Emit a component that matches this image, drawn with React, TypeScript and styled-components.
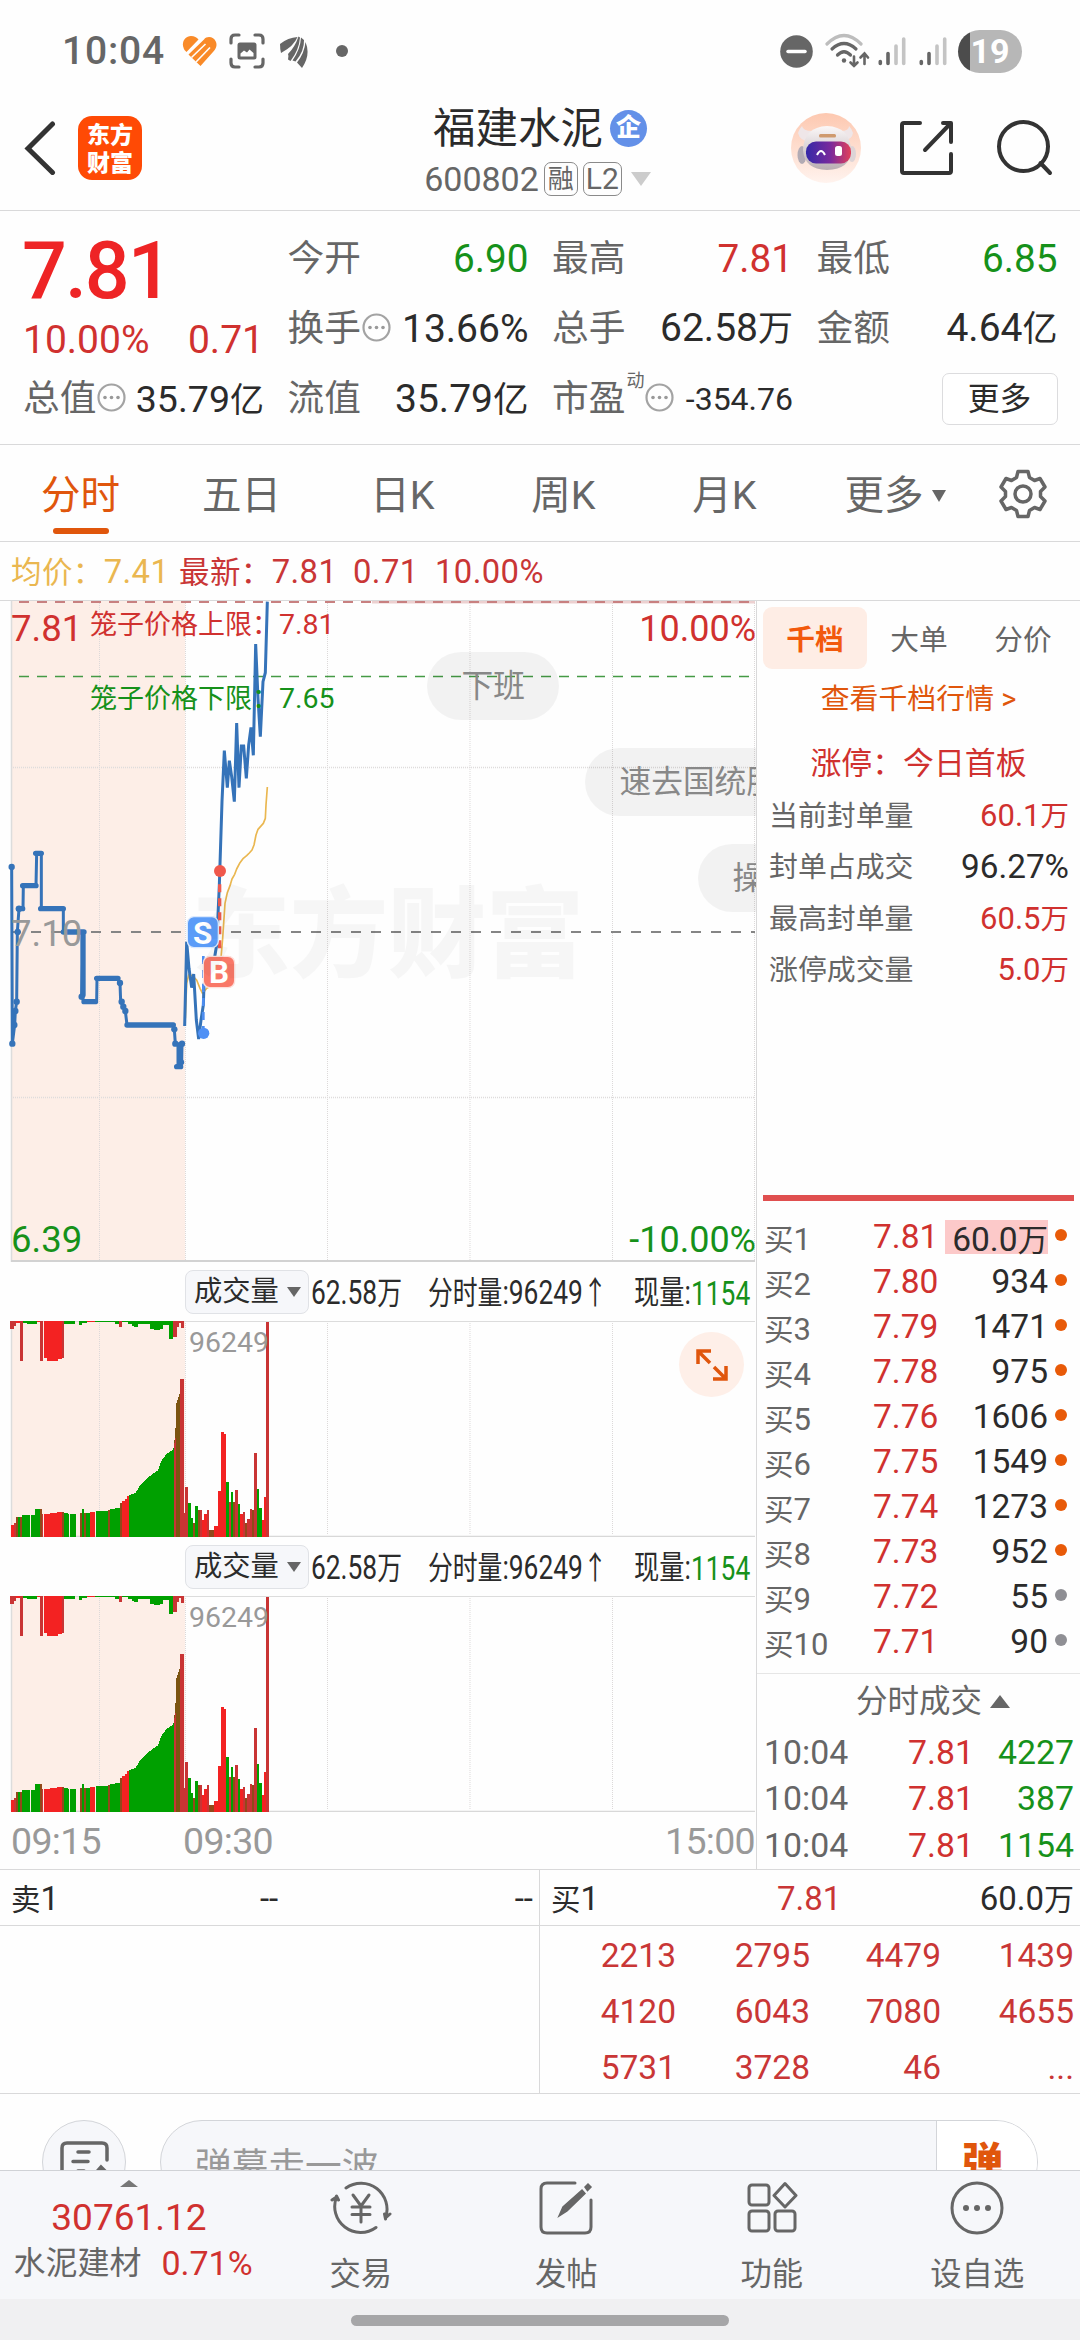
import React from 'react';
import styled, { createGlobalStyle } from 'styled-components';

const RED = '#d0312f';
const GREEN = '#16911a';
const ORANGE = '#e0560c';
const GRAY = '#666';
const INK = '#2b2b2b';
const LINE = '#d9d9da';

const GlobalStyle = createGlobalStyle`
  * { box-sizing: border-box; }
  body {
    margin: 0;
    background: #fefefe;
    font-family: Roboto, 'Noto Sans CJK SC', sans-serif;
    color: ${INK};
  }
  svg { display: block; flex: none; }
`;

const Screen = styled.main`
  width: 1080px;
  height: 2340px;
  overflow: hidden;
  display: flex;
  flex-direction: column;
  background: #fefefe;
`;

/* ---------- status bar ---------- */
const StatusBar = styled.div`
  height: 102px;
  flex: none;
  display: flex;
  justify-content: space-between;
  padding: 0 58px 0 62px;
  align-items: center;
`;
const StatusGroup = styled.div`
  display: flex;
  align-items: center;
  height: 44px;
`;
const Clock = styled.span`
  font-size: 39px;
  font-weight: 500;
  line-height: 44px;
  width: 120px;
  color: ${GRAY};
  letter-spacing: 0.8px;
`;
const Battery = styled.div`
  width: 64px;
  height: 43px;
  border-radius: 22px;
  background: linear-gradient(90deg, #4c4c4c 12px, #b7b7b7 12px);
  color: #fff;
  font-weight: 700;
  font-size: 34px;
  line-height: 43px;
  text-align: center;
`;

/* ---------- header ---------- */
const Header = styled.header`
  height: 109px;
  flex: none;
  display: grid;
  grid-template-columns: 400px 1fr 400px;
  border-bottom: 1px solid ${LINE};
`;
const HeaderLeft = styled.div`
  display: flex;
  align-items: center;
  padding: 0 0 17px 24px;
  gap: 22px;
`;
const HeaderRight = styled.div`
  display: flex;
  align-items: center;
  justify-content: flex-end;
  padding: 0 27px 17px 0;
`;
const AppLogo = styled.div`
  width: 64px;
  height: 64px;
  border-radius: 14px;
  background: #ff4a05;
  color: #fff;
  font: 900 23px/28px 'Noto Sans CJK SC', sans-serif;
  text-align: center;
  padding-top: 3px;
`;
const TitleBlock = styled.div`
  display: flex;
  flex-direction: column;
  align-items: center;
`;
const TitleRow = styled.div`
  display: flex;
  align-items: center;
  height: 53px;
  gap: 7px;
  font-size: 42.5px;
  line-height: 53px;
  white-space: nowrap;
`;
const Verified = styled.span`
  width: 37px;
  height: 37px;
  border-radius: 50%;
  background: #6390e8;
  color: #fff;
  font-size: 25px;
  font-weight: 900;
  line-height: 35px;
  text-align: center;
`;
const CodeRow = styled.div`
  display: flex;
  align-items: center;
  height: 48px;
  gap: 5px;
  font-size: 34px;
  color: ${GRAY};
  margin-left: -5px;
`;
const Tag = styled.span<{ $w: number }>`
  width: ${p => p.$w}px;
  height: 34px;
  border: 1px solid #8a8a8a;
  border-radius: 7px;
  font-size: ${p => (p.$w > 35 ? 30 : 26)}px;
  line-height: 32px;
  display: flex;
  justify-content: center;
`;
const Triangle = styled.i<{ $w: number; $h: number; $c: string; $up?: boolean; $ml?: number }>`
  width: 0;
  height: 0;
  flex: none;
  margin-left: ${p => p.$ml || 0}px;
  border-left: ${p => p.$w / 2}px solid transparent;
  border-right: ${p => p.$w / 2}px solid transparent;
  ${p => (p.$up ? 'border-bottom' : 'border-top')}: ${p => p.$h}px solid ${p => p.$c};
`;

/* ---------- quote ---------- */
const Quote = styled.section`
  height: 234px;
  flex: none;
  display: grid;
  grid-template-columns: 241px 241px 241px 241px;
  column-gap: 23.5px;
  grid-template-rows: 70px 70px 70px;
  padding: 13px 23px 0;
  border-bottom: 1px solid ${LINE};
`;
const BigPrice = styled.div`
  font-size: 79px;
  font-weight: 500;
  line-height: 95px;
  color: #ee2425;
  height: 70px;
  letter-spacing: -2px;
  margin-left: -1px;
`;
const QuoteCell = styled.div<{ $c?: string; $drop?: number }>`
  display: flex;
  align-items: center;
  justify-content: space-between;
  font-size: 39px;
  color: ${p => p.$c || INK};
  white-space: nowrap;
  line-height: 70px;
  padding-top: ${p => p.$drop || 0}px;
`;
const QuoteLabel = styled.span`
  font-size: 36.7px;
  color: ${GRAY};
  display: flex;
  align-items: center;
  gap: 1px;
`;
const QuoteValue = styled.span<{ $size?: number }>`
  font-size: ${p => p.$size || 38.7}px;
`;
const Sup = styled.sup`
  font-size: 18px;
  line-height: 20px;
  align-self: flex-start;
  margin-top: 7px;
`;
const MoreButton = styled.button`
  margin-left: auto;
  width: 116px;
  height: 52px;
  border: 1px solid #dcdcde;
  border-radius: 7px;
  background: #fff;
  font: 31.8px/48px Roboto, 'Noto Sans CJK SC', sans-serif;
  color: ${INK};
  padding: 0;
`;

/* ---------- period tabs ---------- */
const Tabs = styled.nav`
  height: 97px;
  flex: none;
  display: grid;
  grid-template-columns: repeat(5, 161px) 180px 1fr;
  border-bottom: 1px solid ${LINE};
`;
const Tab = styled.div<{ $on?: boolean }>`
  display: flex;
  flex-direction: column;
  align-items: center;
  font-size: 39.5px;
  line-height: 60px;
  padding-top: 21px;
  color: ${p => (p.$on ? ORANGE : GRAY)};
  &::after {
    content: '';
    width: 56px;
    height: 6px;
    border-radius: 3px;
    margin-top: 2px;
    background: ${p => (p.$on ? ORANGE : 'transparent')};
  }
`;
const TabText = styled.span`
  display: flex;
  align-items: center;
  gap: 8px;
`;
const TabIcon = styled.div`
  padding: 24px 0 0 14px;
`;

const InfoLine = styled.div`
  height: 59px;
  flex: none;
  display: flex;
  font-size: 32.8px;
  line-height: 60px;
  letter-spacing: 0.4px;
  padding-left: 11px;
  color: #c93636;
  border-bottom: 1px solid ${LINE};
  white-space: pre;
`;
const InfoItem = styled.span<{ $w: number; $c?: string }>`
  width: ${p => p.$w}px;
  color: ${p => p.$c || 'inherit'};
`;
const Cjk = styled.span<{ $s: number }>`
  font-size: ${p => p.$s}px;
`;

/* ---------- chart ---------- */
const Body = styled.section`
  display: flex;
  height: 1269px;
  flex: none;
  border-bottom: 1px solid ${LINE};
`;
const ChartColumn = styled.div`
  width: 757px;
  border-right: 1px solid ${LINE};
  position: relative;
  flex: none;
`;
const PriceChart = styled.div`
  position: relative;
  height: 661px;
  overflow: hidden;
`;
const Overlay = styled.span<{ $x?: number; $r?: number; $y: number; $s: number; $c: string }>`
  position: absolute;
  ${p => (p.$r !== undefined ? `right: ${p.$r}px` : `left: ${p.$x}px`)};
  top: ${p => p.$y}px;
  font-size: ${p => p.$s}px;
  line-height: 40px;
  color: ${p => p.$c};
  white-space: pre;
`;
const Watermark = styled.span`
  position: absolute;
  left: 192px;
  top: 267px;
  font: 900 98px/116px 'Noto Sans CJK SC', sans-serif;
  color: #000;
  opacity: 0.028;
`;
const Bullet = styled.span<{ $x: number; $y: number }>`
  position: absolute;
  left: ${p => p.$x}px;
  top: ${p => p.$y}px;
  height: 68px;
  border-radius: 34px;
  padding: 0 34.5px;
  background: rgba(0, 0, 0, 0.047);
  color: #888;
  font-size: 31.7px;
  line-height: 70px;
  white-space: nowrap;
`;
const VolumeHeader = styled.div`
  height: 59px;
  display: flex;
  align-items: center;
  padding: 0 0 0 185px;
`;
const VolumeSelect = styled.div`
  width: 124px;
  height: 44px;
  border: 1px solid #e0e2e6;
  border-radius: 8px;
  background: #f6f7fa;
  display: flex;
  align-items: center;
  gap: 8px;
  padding-left: 8px;
  font-size: 28.3px;
  line-height: 42px;
`;
const Condensed = styled.span<{ $w: number; $c?: string }>`
  width: ${p => p.$w}px;
  font-size: 34px;
  line-height: 44px;
  padding-top: 2px;
  white-space: nowrap;
  color: ${p => p.$c || INK};
  flex: none;
  transform: scaleX(0.775);
  transform-origin: left;
`;
const VolumeChart = styled.div`
  height: 216px;
  position: relative;
`;
const ExpandButton = styled.div`
  position: absolute;
  left: 679px;
  top: 11px;
  width: 65px;
  height: 65px;
  border-radius: 50%;
  background: #feefe8;
  display: grid;
  place-items: center;
`;
const TimeAxis = styled.div`
  height: 56px;
  display: grid;
  grid-template-columns: 172px 1fr auto;
  padding: 0 1px 0 11px;
  font-size: 37.5px;
  letter-spacing: -0.7px;
  line-height: 58px;
  color: #999;
`;

/* ---------- order book ---------- */
const Book = styled.aside`
  flex: 1;
  display: flex;
  flex-direction: column;
`;
const BookTabs = styled.div`
  display: grid;
  grid-template-columns: repeat(3, 104px);
  padding: 6px 0 0 6px;
  height: 68px;
`;
const BookTab = styled.span<{ $on?: boolean }>`
  height: 62px;
  border-radius: 9px;
  text-align: center;
  font-size: 28.7px;
  line-height: 67px;
  color: ${p => (p.$on ? '#f2590c' : GRAY)};
  font-weight: ${p => (p.$on ? 700 : 400)};
  background: ${p => (p.$on ? '#feede5' : 'transparent')};
`;
const BookLink = styled.div`
  height: 60px;
  text-align: center;
  font-size: 28.9px;
  line-height: 61px;
  color: ${ORANGE};
`;
const LimitTitle = styled.div`
  height: 61px;
  text-align: center;
  font-size: 30.9px;
  line-height: 70px;
  color: ${RED};
`;
const LimitRow = styled.div`
  display: flex;
  justify-content: space-between;
  padding: 0 11px 0 12px;
  height: 51.3px;
  line-height: 52px;
  font-size: 28.9px;
  color: ${GRAY};
`;
const LimitValue = styled.span<{ $dark?: boolean }>`
  font-size: ${p => (p.$dark ? 33.3 : 31)}px;
  color: ${p => (p.$dark ? INK : RED)};
`;
const RedBar = styled.div`
  height: 6px;
  margin: 200px 6px 14px;
  background: #e04f4f;
`;
const Level = styled.div`
  display: grid;
  grid-template-columns: 109px 72px 103px 1fr;
  height: 45px;
  padding-left: 7px;
  line-height: 45px;
  align-items: center;
`;
const LevelName = styled.span`
  font-size: 31px;
  color: ${GRAY};
  height: 45px;
  line-height: 50px;
`;
const LevelPrice = styled.span`
  font-size: 33.5px;
  color: ${RED};
  margin-top: -1px;
`;
const LevelQty = styled.span<{ $hot?: boolean }>`
  font-size: 33.5px;
  text-align: right;
  height: ${p => (p.$hot ? 34 : 45)}px;
  line-height: ${p => (p.$hot ? 39 : 44)}px;
  background: ${p => (p.$hot ? '#fcc9c9' : 'transparent')};
  white-space: nowrap;
`;
const Dot = styled.i<{ $c: string }>`
  width: 12px;
  height: 12px;
  border-radius: 50%;
  margin: -4px 0 0 7px;
  background: ${p => p.$c};
`;
const TradesTitle = styled.div`
  margin-top: 8px;
  border-top: 1px solid #e6e6e6;
  height: 57px;
  display: flex;
  align-items: center;
  gap: 8px;
  font-size: 31.5px;
  line-height: 56px;
  color: ${GRAY};
  padding-left: 99px;
`;
const Trade = styled.div`
  display: grid;
  grid-template-columns: 144px 60px 1fr;
  height: 48px;
  line-height: 46px;
  padding: 0 6px 0 7px;
  font-size: 33.8px;
  color: ${GRAY};
`;
const Colored = styled.span<{ $c: string; $right?: boolean }>`
  color: ${p => p.$c};
  text-align: ${p => (p.$right ? 'right' : 'left')};
`;

/* ---------- queue ---------- */
const Queue = styled.section`
  height: 224px;
  flex: none;
  display: grid;
  grid-template-columns: 540px 540px;
  grid-template-rows: 56px 168px;
  border-bottom: 1px solid ${LINE};
`;
const QueueHead = styled.div<{ $left?: boolean }>`
  display: grid;
  grid-template-columns: ${p => (p.$left ? '249px 1fr auto' : '226px 1fr auto')};
  padding: 0 6px 0 11px;
  font-size: 33px;
  line-height: 58px;
  border-bottom: 1px solid ${LINE};
  border-right: ${p => (p.$left ? `1px solid ${LINE}` : 'none')};
`;
const QueueEmpty = styled.div`
  border-right: 1px solid ${LINE};
`;
const QueueGrid = styled.div`
  display: grid;
  grid-template-columns: 136px 134px 131px 133px;
  grid-template-rows: repeat(3, 56px);
  text-align: right;
  font-size: 33.5px;
  line-height: 60px;
  color: #c93636;
`;

/* ---------- barrage ---------- */
const Barrage = styled.section`
  height: 76px;
  flex: none;
  overflow: hidden;
  display: flex;
  padding: 26px 42px 0;
  gap: 34px;
`;
const RoundButton = styled.div`
  width: 84px;
  height: 84px;
  border-radius: 50%;
  border: 1px solid #d3d5d9;
  background: #f6f7fa;
  padding: 20px 0 0 17px;
  flex: none;
`;
const BarrageInput = styled.div`
  flex: 1;
  height: 84px;
  border-radius: 42px;
  border: 1px solid #d3d5d9;
  background: #f6f7fa;
  overflow: hidden;
  display: flex;
  font-size: 36.7px;
  line-height: 92px;
  color: #999;
  padding-left: 34px;
  justify-content: space-between;
`;
const BarrageSend = styled.span`
  width: 101px;
  background: #fff;
  border-left: 1px solid #d3d5d9;
  padding-left: 25px;
  color: ${ORANGE};
  font-weight: 900;
  font-size: 41px;
  line-height: 84px;
`;

/* ---------- bottom nav ---------- */
const BottomNav = styled.nav`
  height: 129px;
  flex: none;
  border-top: 1px solid #d0d2d6;
  background: #f6f7fa;
  display: grid;
  grid-template-columns: 258px repeat(4, 205.5px);
`;
const IndexCell = styled.div`
  display: flex;
  flex-direction: column;
  align-items: center;
  padding-top: 9px;
`;
const IndexValue = styled.span`
  font-size: 37px;
  line-height: 42px;
  margin-top: 10px;
  color: ${RED};
`;
const IndexLine = styled.div`
  display: flex;
  gap: 20px;
  font-size: 32px;
  line-height: 48px;
  color: ${GRAY};
  white-space: nowrap;
  margin-left: 8px;
`;
const IndexChange = styled.span`
  font-size: 34px;
  color: ${RED};
`;
const NavItem = styled.div`
  display: flex;
  flex-direction: column;
  align-items: center;
  padding-top: 8px;
  gap: 15px;
  font-size: 31.3px;
  line-height: 46px;
  color: ${GRAY};
`;
const HomeArea = styled.div`
  height: 42px;
  flex: none;
  background: #f0f0f2;
  display: flex;
  justify-content: center;
  padding-top: 16px;
  &::after {
    content: '';
    width: 378px;
    height: 11px;
    border-radius: 6px;
    background: #a6a6a8;
  }
`;
const Spacer = styled.span<{ $w: number }>`
  width: ${p => p.$w}px;
  flex: none;
`;

/* ---------- icons ---------- */
const HeartIcon = () => (
  <svg width="36" height="32" viewBox="0 0 36 32">
    <path d="M2.500 15 C-1.500 8 2.500 1 9 1 C12.500 1 14.500 2.500 16.500 4.500 L4.500 17 Z" fill="#f98a28" />
    <path d="M6.500 19.500 L22 4.500 C25 0.500 32 1.500 34 7 C35.500 11 33.500 14.500 31 17 L18.500 31 L8 21 Z" fill="#f98a28" />
    <path d="M9.500 22.500 L23.500 9" fill="none" stroke="#fefefe" strokeWidth="1.600" />
    <path d="M14 27 L28 12.500" fill="none" stroke="#fefefe" strokeWidth="1.600" />
  </svg>
);
const CaptureIcon = () => (
  <svg width="36" height="36" viewBox="0 0 36 36" fill="none" stroke="#666" strokeWidth="3.200" strokeLinecap="round">
    <path d="M2 10 V6 Q2 2 6 2 H10 M26 2 H30 Q34 2 34 6 V10 M34 26 V30 Q34 34 30 34 H26 M10 34 H6 Q2 34 2 30 V26" />
    <rect x="8.500" y="9.500" width="19" height="17" rx="2.500" fill="#666" stroke="none" />
    <path d="M11.500 23.500 V20.500 L15 17.500 L18 19.500 L20.500 16.500 L24.500 20 V23.500 Z" fill="#fff" stroke="none" />
  </svg>
);
const FeatherIcon = () => (
  <svg width="28" height="33" viewBox="0 0 28 33" fill="#666">
    <path d="M0 9 Q8 2.500 17.500 2 Q14 11 1 18 Q0 14 0 9Z" />
    <path d="M18.500 1.500 L20 2.500 Q19 15 10.500 26 L8 24.500 Q9 21 8 19 Q15 12 18.500 1.500Z" />
    <path d="M21 2.500 L24 5 Q24.500 16 15.500 26.500 L12.500 25.500 Q20.500 14 21 2.500Z" />
    <path d="M25.500 7 Q31 20 22 33 L17 27.500 Q24.500 18 25.500 7Z" />
  </svg>
);
const WifiIcon = () => (
  <svg width="46" height="36" viewBox="0 0 46 36" fill="none" stroke="#666" strokeWidth="3.200" strokeLinecap="round">
    <path d="M2 11 Q19 -6 36 11" stroke="#bdbdbd" />
    <path d="M7 16 Q19 5 31 16" />
    <path d="M12.500 22 Q19 15.500 25.500 22" />
    <circle cx="19" cy="27.500" r="2.200" fill="#666" stroke="none" />
    <path d="M29 23.500 V33 M25.500 29.500 L29 33 L32.500 29.500 M39.500 31 V21 M35.500 24.500 L39.500 20.500 L43 24.500" strokeWidth="2.600" />
  </svg>
);
const SignalIcon = () => (
  <svg width="28" height="30" viewBox="0 0 28 30" strokeWidth="3.600" strokeLinecap="round">
    <path d="M2.300 25.500 V27.500 M10 17.500 V27.500" stroke="#666" />
    <path d="M18 10 V27.500 M25.700 3 V27.500" stroke="#c4c4c4" />
  </svg>
);
const RobotIcon = () => (
  <svg width="70" height="70" viewBox="0 0 70 70">
    <defs>
      <linearGradient id="sky" x1="0" y1="0" x2="0" y2="1"><stop offset="0" stopColor="#fdc8b0" /><stop offset="1" stopColor="#fff3ee" /></linearGradient>
      <linearGradient id="visor" x1="0" y1="0" x2="1" y2="0"><stop offset="0" stopColor="#3529a8" /><stop offset="0.550" stopColor="#7a2a9c" /><stop offset="1" stopColor="#e2405a" /></linearGradient>
      <linearGradient id="head" x1="0" y1="0" x2="0" y2="1"><stop offset="0" stopColor="#fbf8f8" /><stop offset="1" stopColor="#b9adb2" /></linearGradient>
    </defs>
    <circle cx="35" cy="35" r="35" fill="url(#sky)" />
    <path d="M11 13 Q12 18 21 18 L18 28 Q9 28 7 20 Q8 16 11 13 M58 13 Q58 18 50 18 L53 27 Q61 27 62 20 Q61 16 58 13" fill="#efe6e8" />
    <ellipse cx="11" cy="42" rx="4.500" ry="9" fill="#b2abb4" />
    <ellipse cx="61" cy="41" rx="4" ry="8" fill="#ddd4d6" />
    <path d="M12 37 Q13 14 36 13 Q59 14 60 37 Q60 56 36 57 Q13 56 12 37Z" fill="url(#head)" />
    <rect x="28" y="21" width="17" height="3.500" rx="1.500" fill="#cf9a6e" />
    <rect x="15" y="28.500" width="45" height="22" rx="10" fill="url(#visor)" />
    <path d="M26 42 Q30 34 34 42" fill="none" stroke="#fff" strokeWidth="2" />
    <rect x="44" y="33" width="7" height="10" rx="2.500" fill="#fff" />
  </svg>
);
const ShareIcon = () => (
  <svg width="56" height="56" viewBox="0 0 56 56" fill="none" stroke="#333" strokeWidth="4" strokeLinecap="round" strokeLinejoin="round">
    <path d="M21 3 H5 Q3 3 3 5 V51 Q3 53 5 53 H50 Q52 53 52 51 V34" />
    <path d="M44 3 H52 V22 M51 4 L26 30" />
  </svg>
);
const SearchIcon = () => (
  <svg width="57" height="57" viewBox="0 0 57 57" fill="none" stroke="#333" strokeWidth="4" strokeLinecap="round">
    <circle cx="27.500" cy="27.500" r="24.500" />
    <path d="M44.500 44 L54 54" />
  </svg>
);
const MoreDots = () => (
  <svg width="29" height="33" viewBox="0 0 29 33">
    <circle cx="14.500" cy="14.500" r="13" fill="none" stroke="#a3a3a3" strokeWidth="2.200" />
    <g fill="#999"><circle cx="8" cy="14.500" r="1.800" /><circle cx="14.500" cy="14.500" r="1.800" /><circle cx="21" cy="14.500" r="1.800" /></g>
  </svg>
);
const GearIcon = () => (
  <svg width="48" height="50" viewBox="-24 -25 48 50" fill="none" stroke="#666" strokeWidth="3.500" strokeLinejoin="round">
    <path d="M-5 -22.500 H5 L6.500 -16.500 L11.500 -13.500 L17 -15.500 L22 -7 L17.500 -2.500 V2.500 L22 7 L17 15.500 L11.500 13.500 L6.500 16.500 L5 22.500 H-5 L-6.500 16.500 L-11.500 13.500 L-17 15.500 L-22 7 L-17.500 2.500 V-2.500 L-22 -7 L-17 -15.500 L-11.500 -13.500 L-6.500 -16.500 Z" />
    <circle r="8" />
  </svg>
);

/* ---------- chart drawings: units are thirds of a pixel ---------- */
const GRID_X = [99.500, 185.500, 327.500, 470, 612.500, 754.500];
const PRE_MARKET =
  '35,816 37,1346 44,1290 46,1248 50,1220 52,1011 57,941 69,941 70,872 108,872 110,775 124,775 124,941 190,941 190,1011 250,1011 245,1205 252,1220 290,1220 291,1150 352,1150 360,1164 362,1220 370,1235 376,1248 381,1290 518,1290 523,1303 526,1346 534,1346 534,1415 541,1415 541,1346 546,1346 545,1402';
const TRADING =
  '554,1293 560,1040 567,1120 575,1178 581,1137 589,1275 596,1332 603,1275 610,1230 612,1170 625,1100 640,1110 650,1050 658,870 666,620 673,467 682,578 688,497 695,545 703,620 710,384 717,578 724,453 731,453 739,550 746,450 753,397 760,481 767,147 774,310 781,425 789,260 796,233 802,20';
const AVERAGE =
  '556,1270 560,1165 567,1137 580,1145 590,1155 600,1180 608,1196 620,1180 640,1170 655,1165 662,1100 668,1030 675,925 682,893 690,872 696,852 704,838 710,822 720,803 730,790 740,782 748,774 756,765 762,750 768,720 774,703 782,694 790,685 796,670 798,630 802,576';
const THICK = 'M68 872H108 M107 775H124 M122 941H190 M190 1011H252 M249 1011V1200 M252 1220H286 M290 1150H354 M381 1290H520 M55 941H68 M530 1415H542';
const NODES = [[35, 816], [37, 1346], [43, 1290], [46, 1248], [50, 1220], [53, 1011], [57, 941], [245, 1205], [360, 1164], [365, 1220], [370, 1235], [376, 1248], [523, 1303], [526, 1346], [546, 1346], [543, 1402]];

const PriceDrawing = () => (
  <svg width="756" height="661" viewBox="0 0 756 661">
    <rect x="11" y="0" width="174" height="661" fill="#fdeee7" />
    <path d="M11.500 0V661" stroke="#dcdcdc" strokeWidth="1.500" />
    {GRID_X.map(x => <path key={x} d={`M${x} 2V660`} stroke="#dcd9d9" strokeDasharray="1 1" />)}
    <path d="M11 166.500H755M11 496.500H755" stroke="#dedcdc" strokeDasharray="1 1" strokeWidth="1.500" />
    <path d="M372 1H755" stroke="#ecd0d0" strokeWidth="3" />
    <path d="M19 1H750" stroke="#c88080" strokeWidth="2" strokeDasharray="10 8" />
    <path d="M19 75.500H750" stroke="#459a45" strokeWidth="1.400" strokeDasharray="10 8" />
    <path d="M11 331H755" stroke="#858585" strokeWidth="2" strokeDasharray="10 10" />
    <path d="M11 660H755" stroke="#d2d2d2" strokeWidth="2" />
    <g transform="translate(0 -6) scale(0.33333)" fill="none">
      <polyline points={AVERAGE} stroke="#eab750" strokeWidth="5" strokeLinejoin="round" />
      <polyline points={PRE_MARKET} stroke="#3573b9" strokeWidth="9" />
      <path d={THICK} stroke="#3573b9" strokeWidth="16" strokeLinecap="round" />
      {NODES.map(([x, y]) => <circle key={`${x}-${y}`} cx={x} cy={y} r="9.500" fill="#3573b9" />)}
      <polyline points={TRADING} stroke="#3573b9" strokeWidth="9" />
      <path d="M659 868V1062" stroke="#ee5a50" strokeWidth="10" strokeDasharray="24 18" />
      <path d="M610 1083V1300" stroke="#4d8df0" strokeWidth="8" strokeDasharray="24 18" />
      <circle cx="660" cy="828" r="18" fill="#f0584c" />
      <circle cx="611" cy="1315" r="17" fill="#4f90f5" />
      <rect x="562" y="965" width="93" height="93" rx="20" fill="#5b9cf8" stroke="#dbe9fd" strokeWidth="4" />
      <rect x="610" y="1084" width="94" height="94" rx="20" fill="#f97868" stroke="#fde0dc" strokeWidth="4" />
      <g fill="#fff" fontSize="94" fontWeight="700" textAnchor="middle" fontFamily="Roboto, sans-serif">
        <text x="608" y="1046">S</text>
        <text x="657" y="1165">B</text>
      </g>
    </g>
  </svg>
);

type Bar = [number, number, number, string];
const R = '#f32222', G = '#00a000', M = '#92491a', D = '#c93434';
const BARS: Bar[] = [
  [32, 41, 1306, R], [41, 49, 1298, D], [49, 66, 1280, M], [54, 60, 1280, G], [66, 91, 1274, G], [93, 106, 1274, G], [106, 120, 1257, G], [120, 125, 1257, M], [125, 130, 1272, D],
  [132, 172, 1272, R], [150, 186, 1269, R], [172, 192, 1265, R], [187, 193, 1265, M], [193, 203, 1269, G], [203, 208, 1273, G], [209, 227, 1273, G],
  [239, 247, 1270, M], [247, 253, 1258, G], [253, 257, 1270, M], [257, 270, 1268, G], [270, 286, 1267, R], [288, 304, 1264, G], [304, 323, 1262, G],
  [323, 329, 1260, M], [329, 345, 1258, G], [345, 360, 1254, G], [360, 366, 1240, M], [366, 374, 1232, R], [374, 380, 1226, R], [380, 387, 1218, R],
  [541, 551, 867, D], [551, 556, 1268, D], [556, 565, 1192, D], [565, 572, 1240, G], [572, 579, 1283, G], [579, 586, 1298, M], [586, 593, 1248, G],
  [593, 600, 1260, M], [600, 607, 1260, D], [607, 613, 1290, R], [613, 621, 1272, R], [621, 628, 1260, D], [628, 641, 1320, M], [641, 655, 1308, R],
  [655, 663, 1203, R], [663, 671, 1027, R], [671, 678, 1033, R], [678, 686, 1176, G], [686, 692, 1236, D], [692, 699, 1206, G], [699, 706, 1236, M],
  [706, 713, 1200, D], [713, 721, 1241, G], [721, 728, 1272, R], [728, 735, 1265, D], [735, 742, 1298, M], [742, 749, 1288, D], [749, 756, 1257, D],
  [756, 763, 1260, M], [763, 771, 1090, D], [771, 778, 1196, G], [778, 785, 1255, G], [785, 792, 1290, R], [792, 799, 1220, R], [798, 807, 696, D],
];
const TOP_BARS: Bar[] = [
  [30, 42, 716, D], [42, 47, 708, D], [47, 61, 699, R], [61, 69, 812, D], [69, 80, 698, G], [80, 110, 701, G], [110, 120, 697, R], [120, 129, 812, D], [132, 141, 805, R],
  [140, 175, 812, R], [175, 187, 807, R], [187, 193, 803, D], [193, 226, 702, G], [238, 246, 705, G], [246, 262, 699, G], [262, 284, 697, R], [284, 345, 697, G],
  [345, 357, 701, G], [357, 365, 710, D], [365, 385, 697, G], [385, 395, 703, G], [395, 402, 709, G], [402, 415, 712, G], [415, 430, 703, G], [430, 449, 701, G], [449, 462, 717, G], [462, 480, 721, G],
  [480, 488, 716, G], [488, 508, 705, G], [508, 519, 746, G], [519, 531, 742, D], [531, 538, 710, D], [538, 543, 700, D], [543, 551, 714, D],
];
const VolumeDrawing = () => (
  <svg width="756" height="216" viewBox="0 0 756 216">
    <rect x="11" y="0" width="174" height="215" fill="#fdeee7" />
    <path d="M11.500 0V215" stroke="#dcdcdc" strokeWidth="1.500" />
    {GRID_X.slice(0, 5).map(x => <path key={x} d={`M${x} 2V214`} stroke="#dcd9d9" strokeDasharray="1 1" />)}
    <path d="M11 0.500H755" stroke="#dcdcdc" />
    <path d="M11 215.500H755" stroke="#d8d8d8" strokeWidth="1.500" />
    <g transform="translate(0 -231) scale(0.33333)" shapeRendering="crispEdges">
      {BARS.map(([a, b, t, c], i) => <rect key={i} x={a} y={t} width={b - a} height={1340 - t} fill={c} />)}
      <path d="M386 1340V1216L407 1209L420 1185L433 1174L450 1158L475 1140L478 1128L487 1108L500 1092L518 1080L523 1068V1340Z" fill={G} />
      <path d="M521 1340V1072L526 1030L529 942L541 905V1340Z" fill="#7c5410" />
      <path d="M521 1340V1074L527 1040V1340Z" fill={D} />
      {TOP_BARS.map(([a, b, t, c], i) => <rect key={i} x={a} y={693} width={b - a} height={t - 693} fill={c} />)}
    </g>
  </svg>
);

const VolumePanel = ({ expand }: { expand?: boolean }) => (
  <>
    <VolumeHeader>
      <VolumeSelect>成交量<Triangle $w={14} $h={10} $c="#666" /></VolumeSelect>
      <Spacer $w={2} />
      <Condensed $w={117}>62.58<Cjk $s={32}>万</Cjk></Condensed>
      <Condensed $w={206}><Cjk $s={32}>分时量</Cjk>:96249<Cjk $s={32}>↑</Cjk></Condensed>
      <Condensed $w={57}><Cjk $s={32.500}>现量</Cjk>:</Condensed>
      <Condensed $w={60} $c={GREEN}>1154</Condensed>
    </VolumeHeader>
    <VolumeChart>
      <VolumeDrawing />
      <Overlay $x={189} $y={2} $s={28.500} $c="#999">96249</Overlay>
      {expand && (
        <ExpandButton>
          <svg width="34" height="34" viewBox="0 0 34 34" fill="none" stroke={ORANGE} strokeWidth="3.500">
            <path d="M3 16 V3 H16 M3.500 3.500 L15 15 M31 18 V31 H18 M30.500 30.500 L19 19" />
          </svg>
        </ExpandButton>
      )}
    </VolumeChart>
  </>
);

const LEVELS: [string, string][] = [
  ['7.81', '60.0万'], ['7.80', '934'], ['7.79', '1471'], ['7.78', '975'], ['7.76', '1606'],
  ['7.75', '1549'], ['7.74', '1273'], ['7.73', '952'], ['7.72', '55'], ['7.71', '90'],
];
const QUEUE = ['2213', '2795', '4479', '1439', '4120', '6043', '7080', '4655', '5731', '3728', '46', '...'];

export default function App() {
  return (
    <Screen>
      <GlobalStyle />
      <StatusBar>
        <StatusGroup>
          <Clock>10:04</Clock>
          <HeartIcon />
          <Spacer $w={11} />
          <CaptureIcon />
          <Spacer $w={15} />
          <FeatherIcon />
          <Spacer $w={28} />
          <svg width="12" height="12"><circle cx="6" cy="6" r="6" fill="#666" /></svg>
        </StatusGroup>
        <StatusGroup>
          <svg width="33" height="33" viewBox="0 0 33 33">
            <circle cx="16.500" cy="16.500" r="16.300" fill="#666" />
            <path d="M8 16.500H25" stroke="#fff" strokeWidth="3.500" strokeLinecap="round" />
          </svg>
          <Spacer $w={12} />
          <WifiIcon />
          <Spacer $w={7} />
          <SignalIcon />
          <Spacer $w={13} />
          <SignalIcon />
          <Spacer $w={11} />
          <Battery>19</Battery>
        </StatusGroup>
      </StatusBar>

      <Header>
        <HeaderLeft>
          <svg width="32" height="54" viewBox="0 0 32 54" fill="none" stroke="#333" strokeWidth="5" strokeLinecap="round">
            <path d="M28.500 3 L4 27.500 L28.500 51.500" />
          </svg>
          <AppLogo>东方<br />财富</AppLogo>
        </HeaderLeft>
        <TitleBlock>
          <TitleRow>福建水泥<Verified>企</Verified></TitleRow>
          <CodeRow>600802<Tag $w={34}>融</Tag><Tag $w={39}>L2</Tag><Triangle $w={21} $h={14} $c="#ccc" $ml={4} /></CodeRow>
        </TitleBlock>
        <HeaderRight>
          <RobotIcon />
          <Spacer $w={38} />
          <ShareIcon />
          <Spacer $w={41} />
          <SearchIcon />
        </HeaderRight>
      </Header>

      <Quote>
        <BigPrice>7.81</BigPrice>
        <QuoteCell><QuoteLabel>今开</QuoteLabel><QuoteValue><Colored $c={GREEN}>6.90</Colored></QuoteValue></QuoteCell>
        <QuoteCell><QuoteLabel>最高</QuoteLabel><QuoteValue><Colored $c={RED}>7.81</Colored></QuoteValue></QuoteCell>
        <QuoteCell><QuoteLabel>最低</QuoteLabel><QuoteValue><Colored $c={GREEN}>6.85</Colored></QuoteValue></QuoteCell>
        <QuoteCell $c={RED} $drop={22}><span>10.00%</span><span>0.71</span></QuoteCell>
        <QuoteCell><QuoteLabel>换手<MoreDots /></QuoteLabel><QuoteValue $size={39}>13.66%</QuoteValue></QuoteCell>
        <QuoteCell><QuoteLabel>总手</QuoteLabel><QuoteValue $size={39}>62.58<Cjk $s={35}>万</Cjk></QuoteValue></QuoteCell>
        <QuoteCell><QuoteLabel>金额</QuoteLabel><QuoteValue $size={39}>4.64<Cjk $s={35}>亿</Cjk></QuoteValue></QuoteCell>
        <QuoteCell><QuoteLabel>总值<MoreDots /></QuoteLabel><QuoteValue $size={37.500}>35.79<Cjk $s={34}>亿</Cjk></QuoteValue></QuoteCell>
        <QuoteCell><QuoteLabel>流值</QuoteLabel><QuoteValue $size={39}>35.79<Cjk $s={35.500}>亿</Cjk></QuoteValue></QuoteCell>
        <QuoteCell><QuoteLabel>市盈<Sup>动</Sup><MoreDots /></QuoteLabel><QuoteValue $size={32}>-354.76</QuoteValue></QuoteCell>
        <QuoteCell><MoreButton>更多</MoreButton></QuoteCell>
      </Quote>

      <Tabs>
        <Tab $on>分时</Tab>
        <Tab>五日</Tab>
        <Tab>日K</Tab>
        <Tab>周K</Tab>
        <Tab>月K</Tab>
        <Tab><TabText>更多<Triangle $w={14} $h={12} $c="#666" /></TabText></Tab>
        <TabIcon><GearIcon /></TabIcon>
      </Tabs>

      <InfoLine>
        <InfoItem $w={168} $c="#eab750"><Cjk $s={30.500}>均价：</Cjk>7.41</InfoItem>
        <InfoItem $w={174}><Cjk $s={30.500}>最新：</Cjk>7.81</InfoItem>
        <InfoItem $w={82}>0.71</InfoItem>
        <InfoItem $w={120}>10.00%</InfoItem>
      </InfoLine>

      <Body>
        <ChartColumn>
          <PriceChart>
            <Watermark>东方财富</Watermark>
            <PriceDrawing />
            <Overlay $x={11} $y={8} $s={36.500} $c={RED}>7.81</Overlay>
            <Overlay $r={0} $y={8} $s={36} $c={RED}>10.00%</Overlay>
            <Overlay $x={90} $y={4} $s={28.500} $c={RED}><Cjk $s={27}>笼子价格上限：</Cjk>7.81</Overlay>
            <Overlay $x={90} $y={78} $s={28.500} $c={GREEN}><Cjk $s={27}>笼子价格下限：</Cjk>7.65</Overlay>
            <Overlay $x={11} $y={313} $s={36.500} $c="#999">7.10</Overlay>
            <Overlay $x={11} $y={619} $s={36.500} $c={GREEN}>6.39</Overlay>
            <Overlay $r={0} $y={619} $s={36} $c={GREEN}>-10.00%</Overlay>
            <Bullet $x={427} $y={51}>下班</Bullet>
            <Bullet $x={585} $y={147}>速去国统股份</Bullet>
            <Bullet $x={698} $y={243}>操作</Bullet>
          </PriceChart>
          <VolumePanel expand />
          <VolumePanel />
          <TimeAxis><span>09:15</span><span>09:30</span><span>15:00</span></TimeAxis>
        </ChartColumn>

        <Book>
          <BookTabs><BookTab $on>千档</BookTab><BookTab>大单</BookTab><BookTab>分价</BookTab></BookTabs>
          <BookLink>查看千档行情 &gt;</BookLink>
          <LimitTitle>涨停：今日首板</LimitTitle>
          <LimitRow>当前封单量<LimitValue>60.1<Cjk $s={28.500}>万</Cjk></LimitValue></LimitRow>
          <LimitRow>封单占成交<LimitValue $dark>96.27%</LimitValue></LimitRow>
          <LimitRow>最高封单量<LimitValue>60.5<Cjk $s={28.500}>万</Cjk></LimitValue></LimitRow>
          <LimitRow>涨停成交量<LimitValue>5.0<Cjk $s={28.500}>万</Cjk></LimitValue></LimitRow>
          <RedBar />
          {LEVELS.map(([price, qty], i) => (
            <Level key={price}>
              <LevelName><Cjk $s={29.500}>买</Cjk>{i + 1}</LevelName>
              <LevelPrice>{price}</LevelPrice>
              <LevelQty $hot={i === 0}>{i === 0 ? <>60.0<Cjk $s={30.500}>万</Cjk></> : qty}</LevelQty>
              <Dot $c={i < 8 ? '#e85a08' : '#8f8f94'} />
            </Level>
          ))}
          <TradesTitle>分时成交<Triangle $w={20} $h={13} $c="#666" $up /></TradesTitle>
          {['4227', '387', '1154'].map(q => (
            <Trade key={q}><span>10:04</span><Colored $c={RED}>7.81</Colored><Colored $c={GREEN} $right>{q}</Colored></Trade>
          ))}
        </Book>
      </Body>

      <Queue>
        <QueueHead $left><span><Cjk $s={29.500}>卖</Cjk>1</span><span>--</span><span>--</span></QueueHead>
        <QueueHead><span><Cjk $s={29.500}>买</Cjk>1</span><Colored $c="#c93636">7.81</Colored><span>60.0<Cjk $s={30}>万</Cjk></span></QueueHead>
        <QueueEmpty />
        <QueueGrid>{QUEUE.map(q => <span key={q}>{q}</span>)}</QueueGrid>
      </Queue>

      <Barrage>
        <RoundButton>
          <svg width="50" height="50" viewBox="0 0 50 50" fill="none" stroke="#666" strokeWidth="3.500" strokeLinecap="round">
            <path d="M47 19 V7 Q47 2 42 2 H7 Q2 2 2 7 V42 Q2 46 7 46 H22 M18 11 H29 M13 20.500 H28 M18 30 H24 M27 42 L41 26 L48 33 L34 47 Z" />
          </svg>
        </RoundButton>
        <BarrageInput>弹幕走一波<BarrageSend>弹</BarrageSend></BarrageInput>
      </Barrage>

      <BottomNav>
        <IndexCell>
          <Triangle $w={19} $h={7} $c="#777" $up />
          <IndexValue>30761.12</IndexValue>
          <IndexLine>水泥建材<IndexChange>0.71%</IndexChange></IndexLine>
        </IndexCell>
        <NavItem>
          <svg width="62" height="58" viewBox="0 0 62 58" fill="none" stroke="#666" strokeWidth="3" strokeLinecap="round" strokeLinejoin="round">
            <path d="M16 9 A26 26 0 0 1 55.500 39 L60 35 M46 48.500 A26 26 0 0 1 6.500 18 L2 21 M55.500 40 L54.500 35 M6.500 17 L8.500 21" />
            <path d="M23 16 L31 27 L39 16 M31 27 V43 M22 28 H40 M22 35.500 H40" />
          </svg>
          交易
        </NavItem>
        <NavItem>
          <svg width="54" height="58" viewBox="0 0 54 58" fill="none" stroke="#666" strokeWidth="3" strokeLinecap="round">
            <path d="M36 4 H8 Q2 4 2 10 V48 Q2 54 8 54 H46 Q52 54 52 48 V21" />
            <path d="M20 37 L24 28 L43 11 L46 14.500 L28 32 Z M46 8 L49 5 L52 8 L48.500 11.500 Z" fill="#666" strokeWidth="1.500" />
          </svg>
          发帖
        </NavItem>
        <NavItem>
          <svg width="52" height="58" viewBox="0 0 52 58" fill="none" stroke="#666" strokeWidth="3" strokeLinejoin="round">
            <rect x="3" y="6" width="20" height="20" rx="3" />
            <rect x="3" y="32" width="20" height="20" rx="3" />
            <rect x="29" y="32" width="20" height="20" rx="3" />
            <path d="M39 4.500 L50 16.500 L39 28 L28 16.500 Z" />
          </svg>
          功能
        </NavItem>
        <NavItem>
          <svg width="56" height="58" viewBox="0 0 56 58">
            <circle cx="28" cy="29" r="25" fill="none" stroke="#666" strokeWidth="3" />
            <g fill="#666"><circle cx="17" cy="29" r="3" /><circle cx="28" cy="29" r="3" /><circle cx="39" cy="29" r="3" /></g>
          </svg>
          设自选
        </NavItem>
      </BottomNav>
      <HomeArea />
    </Screen>
  );
}
